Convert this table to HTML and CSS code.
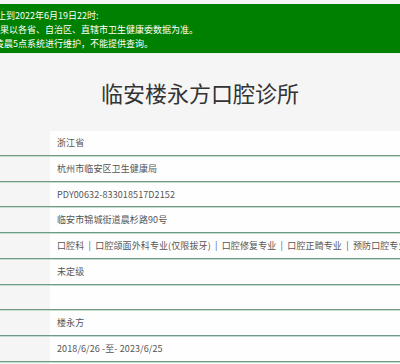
FILE: index.html
```html
<!DOCTYPE html>
<html lang="zh-CN">
<head>
<meta charset="utf-8">
<title>临安楼永方口腔诊所</title>
<link rel="stylesheet" href="styles.css">
</head>
<body>
<div class="page">
  <div class="banner">
    <p class="line l1">截止到2022年6月19日22时:</p>
    <p class="line l2">结果以各省、自治区、直辖市卫生健康委数据为准。</p>
    <p class="line l3">凌晨5点系统进行维护，不能提供查询。</p>
  </div>
  <h1 class="title">临安楼永方口腔诊所</h1>
  <div class="table">
    <div class="row"><div class="label"></div><div class="value">浙江省</div></div>
    <div class="row"><div class="label"></div><div class="value">杭州市临安区卫生健康局</div></div>
    <div class="row"><div class="label"></div><div class="value">PDY00632-833018517D2152</div></div>
    <div class="row"><div class="label"></div><div class="value">临安市锦城街道晨杉路90号</div></div>
    <div class="row"><div class="label"></div><div class="value">口腔科 &nbsp;|&nbsp; 口腔颌面外科专业(仅限拔牙) &nbsp;|&nbsp; 口腔修复专业 &nbsp;|&nbsp; 口腔正畸专业 &nbsp;|&nbsp; 预防口腔专业</div></div>
    <div class="row"><div class="label"></div><div class="value">未定级</div></div>
    <div class="row"><div class="label"></div><div class="value"></div></div>
    <div class="row"><div class="label"></div><div class="value">楼永方</div></div>
    <div class="row"><div class="label"></div><div class="value">2018/6/26 -至- 2023/6/25</div></div>
    <div class="row"><div class="label"></div><div class="value"></div></div>
  </div>
</div>
</body>
</html>
```
FILE: styles.css
```css
html, body {
  margin: 0;
  padding: 0;
}
body {
  background: #f6f5f5;
  font-family: "Noto Sans CJK SC", "Noto Sans", sans-serif;
  overflow: hidden;
  width: 400px;
  height: 364px;
}
.page {
  padding-top: 4px;
  background: #f6f5f5;
}
.banner {
  background: #008000;
  color: #ffffff;
  font-size: 9px;
  line-height: 14px;
  padding: 5px 0 2px;
  border-bottom: 1px solid #e9f3ea;
  overflow: hidden;
  white-space: nowrap;
}
.line {
  margin: 0;
}
.l1 { text-indent: -12px; }
.l2 { text-indent: -9px; }
.l3 { text-indent: -5px; }
.title {
  margin: 0;
  padding: 23px 0 24px;
  font-size: 22px;
  line-height: 30px;
  font-weight: normal;
  color: #333333;
  text-align: center;
}
.table {
  display: flex;
  flex-direction: column;
}
.row {
  display: flex;
  height: 23.75px;
  border-bottom: 1px solid #6f9a86;
  box-shadow: 0 1px 0 #c4ddd0;
  margin-bottom: 1px;
}
.label {
  width: 50px;
  flex: none;
  background: #f5f5f5;
}
.value {
  flex: 1;
  background: #fffefe;
  padding-left: 7px;
  font-size: 9px;
  line-height: 23.75px;
  color: #555555;
  white-space: nowrap;
  letter-spacing: 0.1px;
}
```
